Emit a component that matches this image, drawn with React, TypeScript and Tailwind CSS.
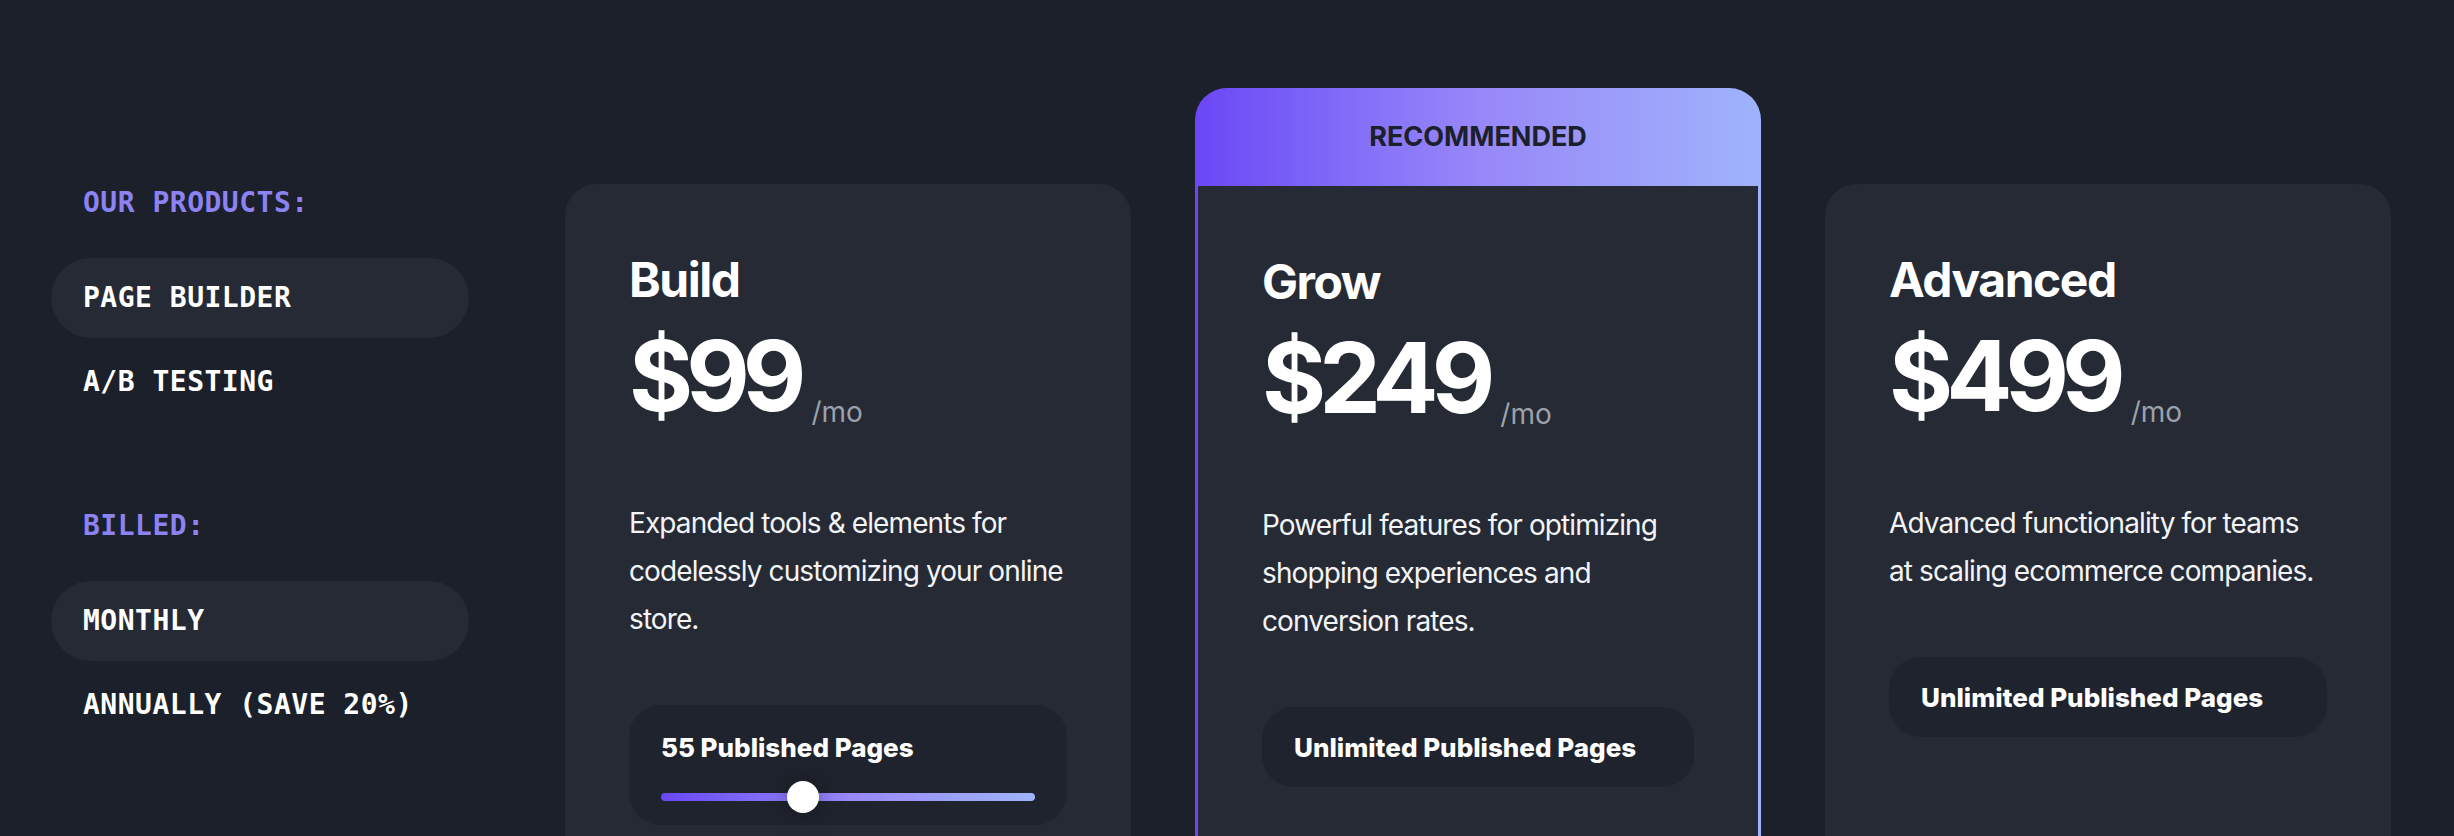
import React, { useState } from 'react';

type Plan = {
  name: string;
  price: string;
  description: string;
  pages: string;
  slider?: boolean;
  featured?: boolean;
};

const plans: Plan[] = [
  {
    name: 'Build',
    price: '$99',
    description: 'Expanded tools & elements for codelessly customizing your online store.',
    pages: '55 Published Pages',
    slider: true,
  },
  {
    name: 'Grow',
    price: '$249',
    description: 'Powerful features for optimizing shopping experiences and conversion rates.',
    pages: 'Unlimited Published Pages',
    featured: true,
  },
  {
    name: 'Advanced',
    price: '$499',
    description: 'Advanced functionality for teams at scaling ecommerce companies.',
    pages: 'Unlimited Published Pages',
  },
];

const mono = { fontFamily: '"DejaVu Sans Mono", "Liberation Mono", monospace' };
const sans = { fontFamily: 'Inter, "Liberation Sans", sans-serif' };

const OptionGroup: React.FC<{
  title: string;
  options: string[];
  active: number;
  onSelect: (i: number) => void;
  className?: string;
}> = ({ title, options, active, onSelect, className = '' }) => (
  <div className={className}>
    <p className="pl-8 text-[28px] leading-[40px] font-bold tracking-[0.5px] text-[#8c82f2] mb-[35px]" style={mono}>
      {title}
    </p>
    <ul className="flex flex-col gap-1">
      {options.map((opt, i) => (
        <li key={opt}>
          <button
            onClick={() => onSelect(i)}
            className={`w-full h-20 px-8 flex items-center rounded-full text-left text-[28px] font-bold tracking-[0.5px] text-white ${
              i === active ? 'bg-[#252a35]' : ''
            }`}
            style={mono}
          >
            {opt}
          </button>
        </li>
      ))}
    </ul>
  </div>
);

const PagesSlider: React.FC<{ label: string }> = ({ label }) => {
  const [value] = useState(38);
  return (
    <div className="mt-[62px] h-[120px] rounded-[32px] bg-[#1f232d] px-8 pt-[28px]">
      <p className="text-[26px] leading-[30px] font-extrabold text-white" style={sans}>
        {label}
      </p>
      <div className="relative mt-[30px] h-2 rounded-full bg-gradient-to-r from-[#6b46f6] via-[#9887f8] to-[#9fb3fb]">
        <div
          className="absolute top-1/2 h-8 w-8 -translate-x-1/2 -translate-y-1/2 rounded-full bg-white shadow-[0_0_24px_rgba(0,0,0,0.35)]"
          style={{ left: `${value}%` }}
        />
      </div>
    </div>
  );
};

const CardBody: React.FC<{ plan: Plan }> = ({ plan }) => (
  <div className="px-16 pt-[72px]" style={sans}>
    <h2 className="text-[48px] leading-[48px] font-bold tracking-[-1.5px] text-white">{plan.name}</h2>
    <div className="mt-[22px] flex items-end gap-[12px]">
      <span className="text-[98px] leading-[100px] font-bold tracking-[-7px] text-white">{plan.price}</span>
      <span className="text-[28px] leading-[28px] text-[#9ca1ab]">/mo</span>
    </div>
    <p className="mt-[73px] text-[28px] leading-[48px] tracking-[-0.9px] text-[#f3f4f6]">{plan.description}</p>
    {plan.slider ? (
      <PagesSlider label={plan.pages} />
    ) : (
      <div className="mt-[62px] h-20 rounded-[32px] bg-[#1f232d] px-8 flex items-center">
        <span className="text-[26px] font-extrabold text-white">{plan.pages}</span>
      </div>
    )}
  </div>
);

export default function App() {
  const [product, setProduct] = useState(0);
  const [billing, setBilling] = useState(0);

  return (
    <div className="h-[836px] overflow-hidden bg-[#1b202a]">
      <div className="flex items-start pl-[51px] pt-[88px]">
        <aside className="mt-[95px] w-[418px] shrink-0">
          <OptionGroup
            title="OUR PRODUCTS:"
            options={['PAGE BUILDER', 'A/B TESTING']}
            active={product}
            onSelect={setProduct}
          />
          <OptionGroup
            className="mt-[84px]"
            title="BILLED:"
            options={['MONTHLY', 'ANNUALLY (SAVE 20%)']}
            active={billing}
            onSelect={setBilling}
          />
        </aside>

        <div className="ml-[96px] flex gap-16">
          {plans.map((plan) =>
            plan.featured ? (
              <div
                key={plan.name}
                className="w-[566px] rounded-[32px] bg-gradient-to-r from-[#6b46f6] via-[#9887f8] to-[#9fb3fb] px-[3px] pb-[3px]"
              >
                <div className="h-[98px] flex items-center justify-center">
                  <span className="text-[27px] font-bold text-[#1b202a]" style={sans}>
                    RECOMMENDED
                  </span>
                </div>
                <div className="h-[760px] bg-[#252a35] rounded-b-[29px]">
                  <CardBody plan={plan} />
                </div>
              </div>
            ) : (
              <div key={plan.name} className="mt-[96px] w-[566px] h-[760px] rounded-[32px] bg-[#252a35]">
                <CardBody plan={plan} />
              </div>
            )
          )}
        </div>
      </div>
    </div>
  );
}
